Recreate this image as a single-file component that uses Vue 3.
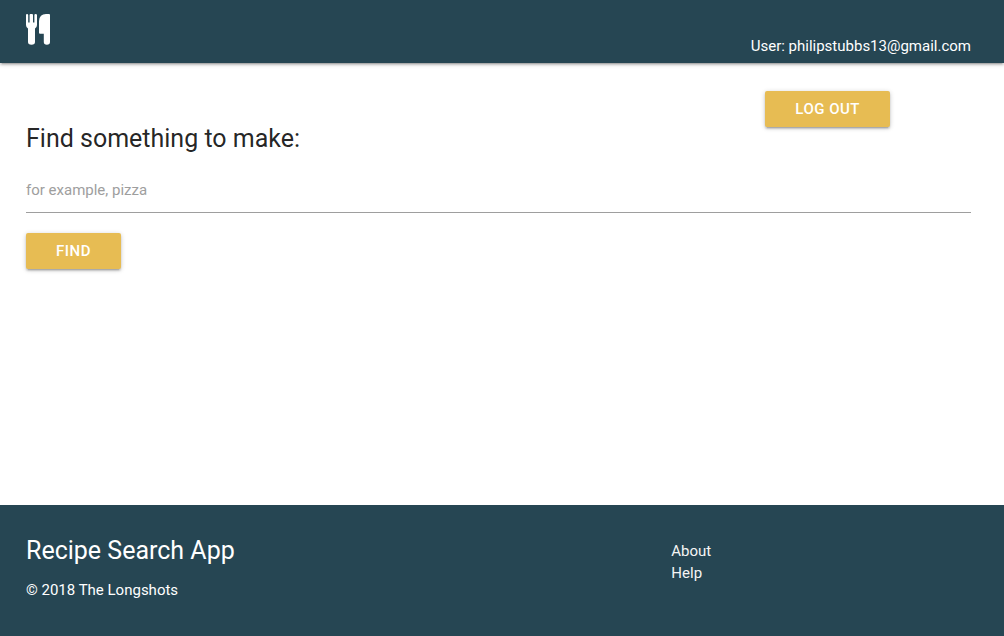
<script setup>
import { ref } from 'vue'

const query = ref('')
</script>

<template>
  <div class="page">
    <header class="navbar">
      <a class="brand" href="#" aria-label="Recipe Search App">
        <svg width="25" height="31" viewBox="0 0 25 31" fill="#fff" aria-hidden="true">
          <path d="M0 1Q0 0 1 0Q2.200 0 2.200 1V8.500H3.600V1Q3.600 0 4.500 0H6Q7 0 7 1V8.500H8.400V1Q8.400 0 9.500 0Q11 0 11 1V11Q11 13 9 14.500V28Q9 30.800 5.500 30.800Q2 30.800 2 28V14.500Q0 13 0 11Z" />
          <path d="M24 1V28Q24 30.800 20.900 30.800Q17.800 30.800 17.800 28V19.800H14Q13 19.800 13 18.800V7Q13.500 0 20 0H23Q24 0 24 1Z" />
        </svg>
      </a>
      <span class="user">User: philipstubbs13@gmail.com</span>
    </header>

    <main class="content">
      <div class="account">
        <button class="btn" type="button">Log out</button>
      </div>
      <form class="search" @submit.prevent>
        <label class="title" for="query">Find something to make:</label>
        <input id="query" v-model="query" class="field" type="text" placeholder="for example, pizza">
        <button class="btn" type="submit">Find</button>
      </form>
    </main>

    <footer class="footer">
      <div class="about">
        <h2>Recipe Search App</h2>
        <p>© 2018 The Longshots</p>
      </div>
      <nav class="links">
        <a href="#">About</a>
        <a href="#">Help</a>
      </nav>
    </footer>
  </div>
</template>

<style>
body {
  margin: 0;
  background: #fff;
}
</style>

<style scoped>
.page {
  display: flex;
  flex-direction: column;
  min-height: 100vh;
  font-family: Roboto, "Liberation Sans", sans-serif;
  font-size: 15px;
  line-height: 22px;
  color: rgba(0, 0, 0, 0.87);
}

.navbar {
  display: flex;
  justify-content: space-between;
  height: 63px;
  padding: 0 33px 0 26px;
  box-sizing: border-box;
  background: #264653;
  color: #fff;
  box-shadow: 0 2px 2px 0 rgba(0, 0, 0, 0.14), 0 3px 1px -2px rgba(0, 0, 0, 0.12), 0 1px 5px 0 rgba(0, 0, 0, 0.2);
}

.brand {
  padding-top: 14px;
}

.brand svg {
  display: block;
}

.user {
  padding-top: 35px;
}

.content {
  flex: 1;
  padding: 28px 33px 0 26px;
}

.account {
  display: flex;
  justify-content: flex-end;
  height: 32px;
  padding-right: 81px;
}

.btn {
  height: 36px;
  padding: 0 30px;
  border: 0;
  border-radius: 2px;
  background: #e7bc53;
  color: #fff;
  font: 500 15px/36px Roboto, "Liberation Sans", sans-serif;
  letter-spacing: 0.5px;
  text-transform: uppercase;
  cursor: pointer;
  box-shadow: 0 2px 2px 0 rgba(0, 0, 0, 0.14), 0 3px 1px -2px rgba(0, 0, 0, 0.12), 0 1px 5px 0 rgba(0, 0, 0, 0.2);
}

.search {
  display: flex;
  flex-direction: column;
  align-items: flex-start;
}

.title {
  font-size: 25px;
  line-height: 32px;
}

.field {
  width: 100%;
  height: 46px;
  margin: 12px 0 20px;
  padding: 0;
  box-sizing: border-box;
  border: 0;
  border-bottom: 1px solid #9e9e9e;
  outline: none;
  background: transparent;
  color: inherit;
  font: inherit;
}

.field::placeholder {
  color: #9e9e9e;
  opacity: 1;
}

.footer {
  display: grid;
  grid-template-columns: 2fr 1fr;
  min-height: 131px;
  padding: 30px 10px 24px 26px;
  box-sizing: border-box;
  background: #264653;
  color: #fff;
}

.footer h2 {
  margin: 0 0 12px;
  font-size: 25px;
  font-weight: 400;
  line-height: 32px;
}

.footer p {
  margin: 0;
}

.links {
  display: flex;
  flex-direction: column;
  padding-top: 5px;
}

.links a {
  color: #f5f5f5;
  text-decoration: none;
}
</style>
